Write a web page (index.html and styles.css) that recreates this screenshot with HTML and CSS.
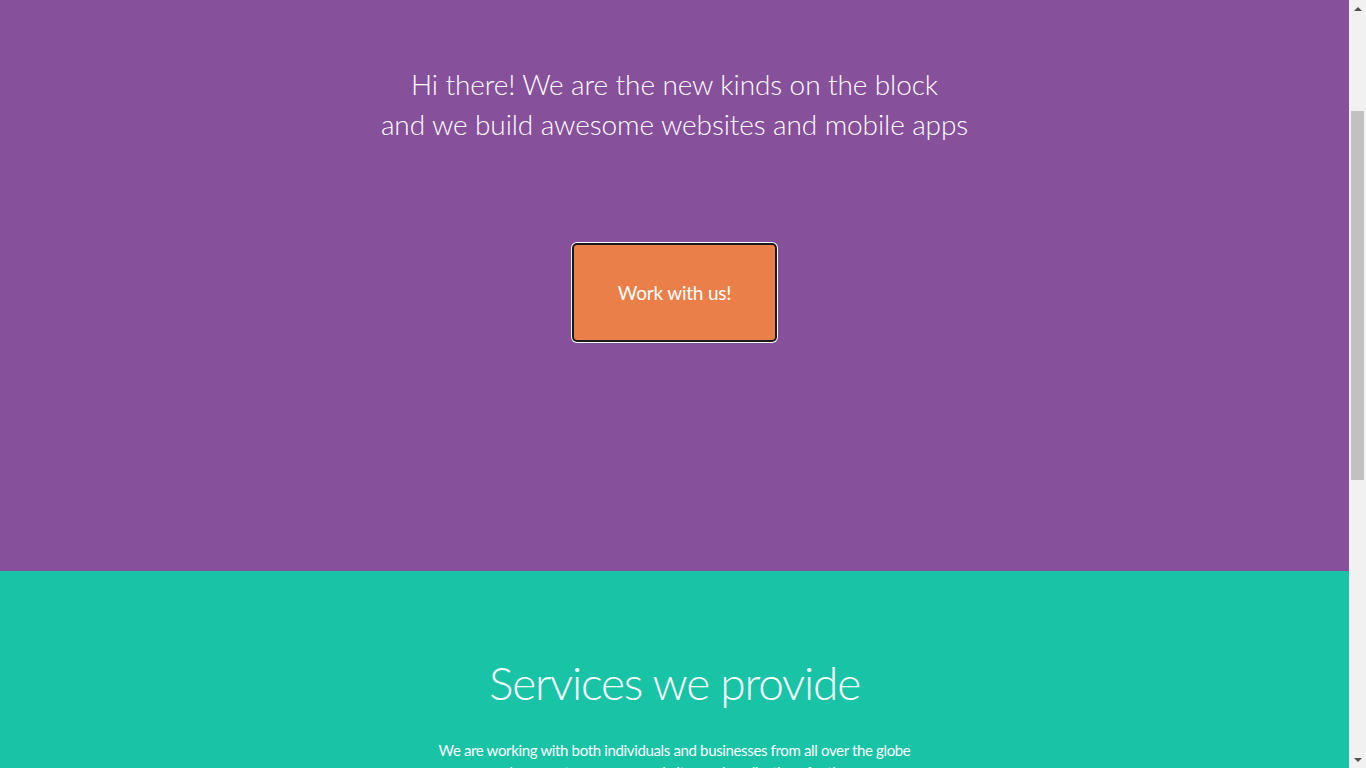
FILE: index.html
```html
<!DOCTYPE html>
<html lang="en">
<head>
<meta charset="utf-8">
<title>New kids on the block</title>
<link rel="stylesheet" href="styles.css">
</head>
<body>
<div class="page">
  <section class="hero">
    <h1 class="hero-title">Hi there! We are the new kinds on the block<br>and we build awesome websites and mobile apps</h1>
    <div class="hero-action">
      <a class="btn-work" href="#contact">Work with us!</a>
    </div>
  </section>
  <section class="services">
    <h2 class="services-title">Services we provide</h2>
    <p class="services-lead">We are working with both individuals and businesses from all over the globe<br>and we create awesome websites and applications for them</p>
    <div class="services-grid">
      <div class="service"><h3>Web design</h3><p>Beautiful, responsive websites that look great on every screen.</p></div>
      <div class="service"><h3>Development</h3><p>Robust front-end and back-end code built to last.</p></div>
      <div class="service"><h3>Mobile apps</h3><p>Native and hybrid apps for iOS and Android.</p></div>
    </div>
  </section>
</div>
<div class="scrollbar" aria-hidden="true">
  <span class="sb-arrow sb-up"></span>
  <span class="sb-track"><span class="sb-thumb"></span></span>
  <span class="sb-arrow sb-down"></span>
</div>
</body>
</html>
```
FILE: styles.css
```css
html, body {
  margin: 0;
  padding: 0;
}
html {
  overflow: hidden;
}
body {
  font-family: Lato, "Open Sans", sans-serif;
  color: #fff;
}
.page {
  margin-right: 17px;
}
.hero {
  background: #86509b;
  height: 571px;
  box-sizing: border-box;
  padding-top: 64px;
  text-align: center;
}
.hero-title {
  margin: 0;
  font-weight: 300;
  font-size: 28px;
  line-height: 40px;
  letter-spacing: -0.1px;
}
.hero-action {
  display: flex;
  justify-content: center;
  margin-top: 99px;
}
.btn-work {
  display: flex;
  align-items: center;
  justify-content: center;
  width: 201px;
  height: 95px;
  background: #eb7f4a;
  border: 2px solid #1a1a1a;
  border-radius: 5px;
  box-shadow: 0 0 0 1px #fff;
  color: #fff;
  font-size: 19px;
  letter-spacing: -0.2px;
  text-decoration: none;
}
.services {
  background: #19c3a6;
  text-align: center;
  padding: 82px 20px 120px;
}
.services-title {
  margin: 0;
  font-weight: 300;
  font-size: 46px;
  line-height: 60px;
  letter-spacing: -1.2px;
}
.services-lead {
  margin: 26px 0 0;
  font-size: 15px;
  line-height: 22px;
  letter-spacing: -0.35px;
}
.services-grid {
  display: grid;
  grid-template-columns: repeat(3, 260px);
  justify-content: center;
  gap: 40px;
  margin-top: 80px;
}
.service h3 {
  font-weight: 400;
  font-size: 24px;
  margin: 0 0 12px;
}
.service p {
  margin: 0;
  font-size: 15px;
  line-height: 22px;
}
.scrollbar {
  position: fixed;
  top: 0;
  right: 0;
  width: 17px;
  height: 100vh;
  background: #f1f1f1;
  display: flex;
  flex-direction: column;
}
.sb-arrow {
  height: 17px;
  flex: none;
  display: flex;
  align-items: center;
  justify-content: center;
}
.sb-up::before,
.sb-down::before {
  content: "";
  width: 0;
  height: 0;
  border-left: 4px solid transparent;
  border-right: 4px solid transparent;
}
.sb-up::before {
  border-bottom: 4px solid #505050;
}
.sb-down::before {
  border-top: 4px solid #505050;
}
.sb-track {
  flex: 1;
  padding: 94px 2px 0;
}
.sb-thumb {
  display: block;
  height: 369px;
  background: #c1c1c1;
}
```
